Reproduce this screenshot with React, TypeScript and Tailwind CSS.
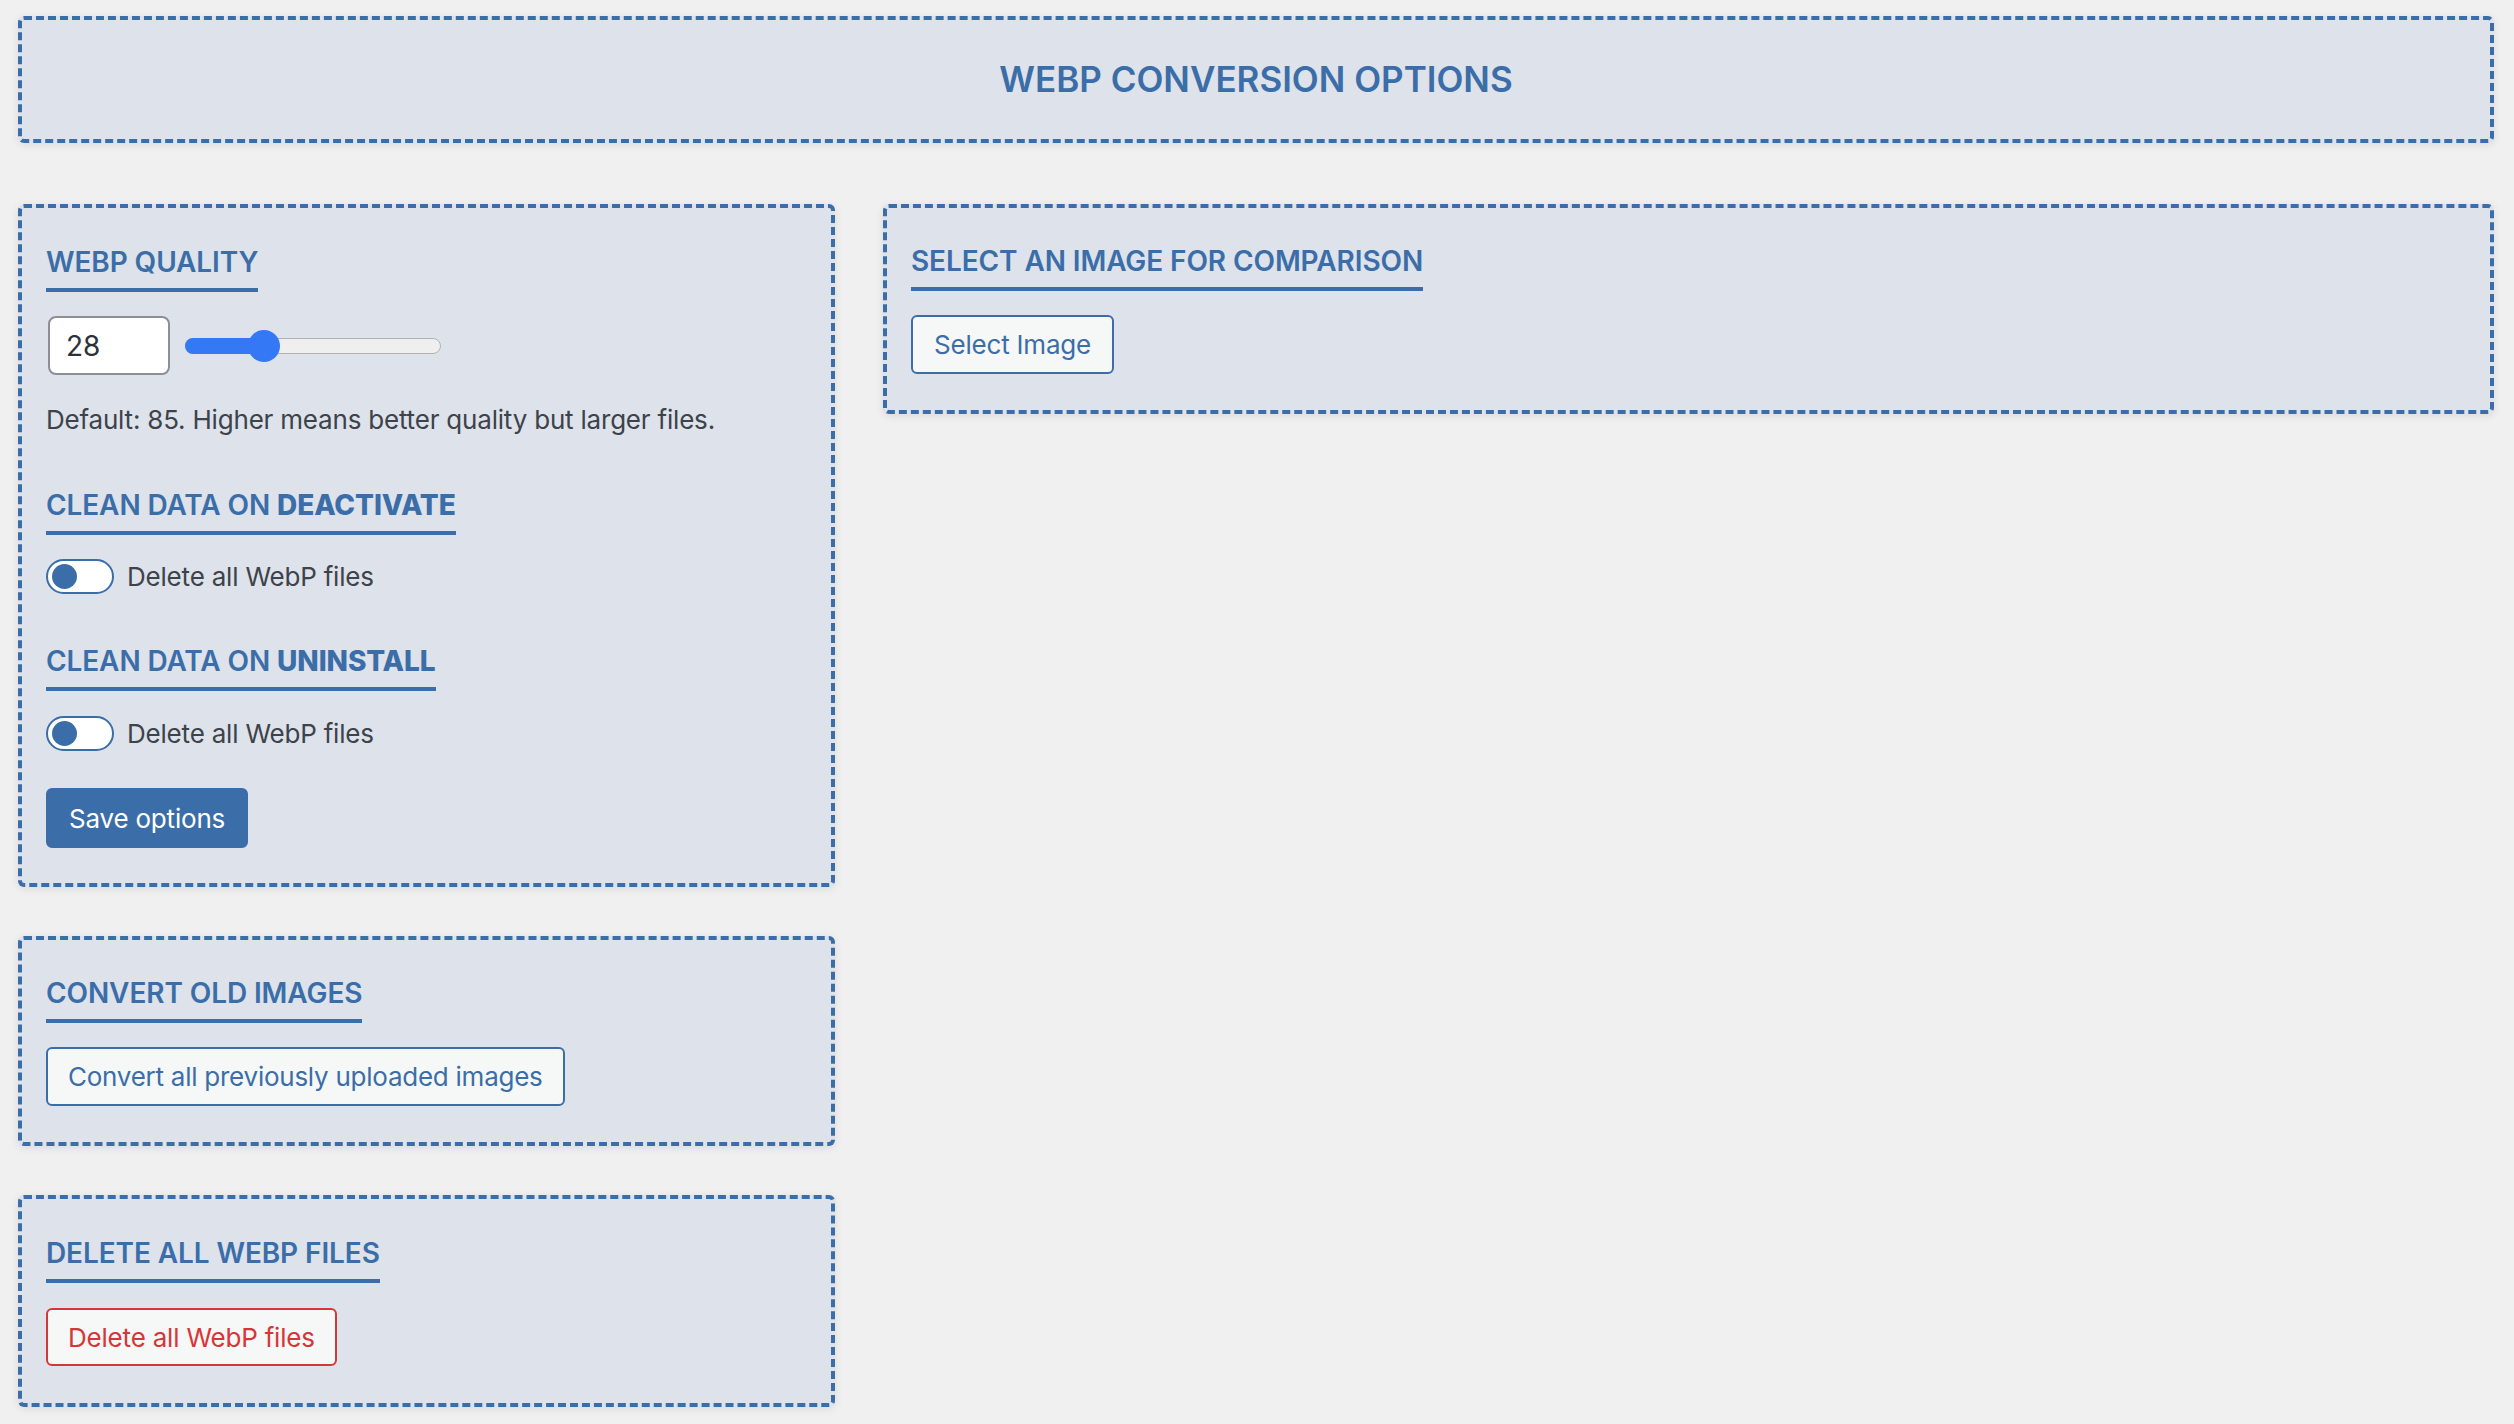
import { useState } from "react";

function Card({ children, className = "" }: { children: React.ReactNode; className?: string }) {
  return (
    <div
      className={`rounded-[6px] border-4 border-dashed border-[#3b6ea8] bg-[#dee2ea] px-[24px] shadow-[0_2px_8px_rgba(0,0,0,0.09)] ${className}`}
    >
      {children}
    </div>
  );
}

function Heading({ children }: { children: React.ReactNode }) {
  return (
    <h2 className="w-fit border-b-4 border-[#3b6ea8] pb-[9px] text-[28px] leading-[34px] font-semibold uppercase tracking-[-0.1px] text-[#3b6ea8]">
      {children}
    </h2>
  );
}

function Toggle({ label }: { label: string }) {
  const [on, setOn] = useState(false);
  return (
    <label className="flex h-[35px] cursor-pointer items-center gap-[13px]">
      <button
        type="button"
        onClick={() => setOn(!on)}
        className={`flex h-[35px] w-[68px] items-center rounded-full border-2 border-[#3b6ea8] bg-white px-[4px] ${
          on ? "justify-end" : "justify-start"
        }`}
      >
        <span className="h-[25px] w-[25px] rounded-full bg-[#3b6ea8]" />
      </button>
      <span className="text-[26px] leading-[36px] tracking-[-0.2px] text-[#3c434a]">{label}</span>
    </label>
  );
}

function QualitySlider({ value }: { value: number }) {
  // thumb travels between 0 and width - thumb size, like a native range input
  const trackW = 256;
  const thumb = 32;
  const center = thumb / 2 + ((trackW - thumb) * value) / 100;
  return (
    <div className="relative h-[16px] w-[256px] rounded-full border border-[#b2b2b2] bg-[#efefef]">
      <div className="absolute -left-px -top-px h-[16px] rounded-full bg-[#3478f6]" style={{ width: center }} />
      <div
        className="absolute top-1/2 h-[32px] w-[32px] -translate-y-1/2 rounded-full bg-[#3478f6]"
        style={{ left: center - thumb / 2 - 1 }}
      />
    </div>
  );
}

export default function App() {
  const [quality, setQuality] = useState("28");

  return (
    <div className="min-h-screen bg-[#f0f0f1] pb-[16px] pl-[18px] pr-[20px] pt-[16px] font-['Inter','Noto_Sans',sans-serif]">
      <div className="flex h-[127px] items-center justify-center rounded-[6px] border-4 border-dashed border-[#3b6ea8] bg-[#dee2ea] shadow-[0_2px_8px_rgba(0,0,0,0.09)]">
        <h1 className="text-[35px] leading-none font-semibold text-[#3b6ea8]">WEBP CONVERSION OPTIONS</h1>
      </div>

      <div className="mt-[61px] flex items-start gap-[48px]">
        <div className="flex w-[817px] shrink-0 flex-col gap-[49px]">
          <Card className="pb-[35px] pt-[37px]">
            <Heading>WebP Quality</Heading>
            <div className="mt-[24px] flex items-center gap-[15px]">
              <input
                type="text"
                value={quality}
                onChange={(e) => setQuality(e.target.value)}
                className="ml-[2px] h-[59px] w-[122px] rounded-[8px] border-2 border-[#8c8f94] bg-white px-[16px] text-[28px] text-[#2c3338] outline-none"
              />
              <QualitySlider value={Number(quality) || 0} />
            </div>
            <p className="mt-[27px] text-[26px] leading-[36px] tracking-[-0.2px] text-[#3c434a]">
              Default: 85. Higher means better quality but larger files.
            </p>

            <div className="mt-[50px]">
              <Heading>
                Clean data on <span className="font-extrabold">deactivate</span>
              </Heading>
            </div>
            <div className="mt-[24px]">
              <Toggle label="Delete all WebP files" />
            </div>

            <div className="mt-[50px]">
              <Heading>
                Clean data on <span className="font-extrabold">uninstall</span>
              </Heading>
            </div>
            <div className="mt-[25px]">
              <Toggle label="Delete all WebP files" />
            </div>

            <button
              type="button"
              className="mt-[37px] h-[60px] rounded-[6px] border-2 border-[#3b6ea8] bg-[#3b6ea8] px-[21px] text-[26px] tracking-[-0.2px] text-white"
            >
              Save options
            </button>
          </Card>

          <Card className="pb-[36px] pt-[36px]">
            <Heading>Convert old images</Heading>
            <button
              type="button"
              className="mt-[24px] h-[59px] rounded-[6px] border-2 border-[#3b6ea8] bg-[#f6f7f7] px-[20px] text-[26px] tracking-[-0.25px] text-[#3b6ea8]"
            >
              Convert all previously uploaded images
            </button>
          </Card>

          <Card className="pb-[37px] pt-[37px]">
            <Heading>Delete all WebP files</Heading>
            <button
              type="button"
              className="mt-[25px] h-[58px] rounded-[6px] border-2 border-[#d63638] bg-[#f6f7f7] px-[20px] text-[26px] tracking-[-0.2px] text-[#d63638]"
            >
              Delete all WebP files
            </button>
          </Card>
        </div>

        <Card className="flex-1 pb-[36px] pt-[36px]">
          <Heading>Select an image for comparison</Heading>
          <button
            type="button"
            className="mt-[24px] h-[59px] rounded-[6px] border-2 border-[#3b6ea8] bg-[#f6f7f7] px-[21px] text-[26px] tracking-[-0.2px] text-[#3b6ea8]"
          >
            Select Image
          </button>
        </Card>
      </div>
    </div>
  );
}
